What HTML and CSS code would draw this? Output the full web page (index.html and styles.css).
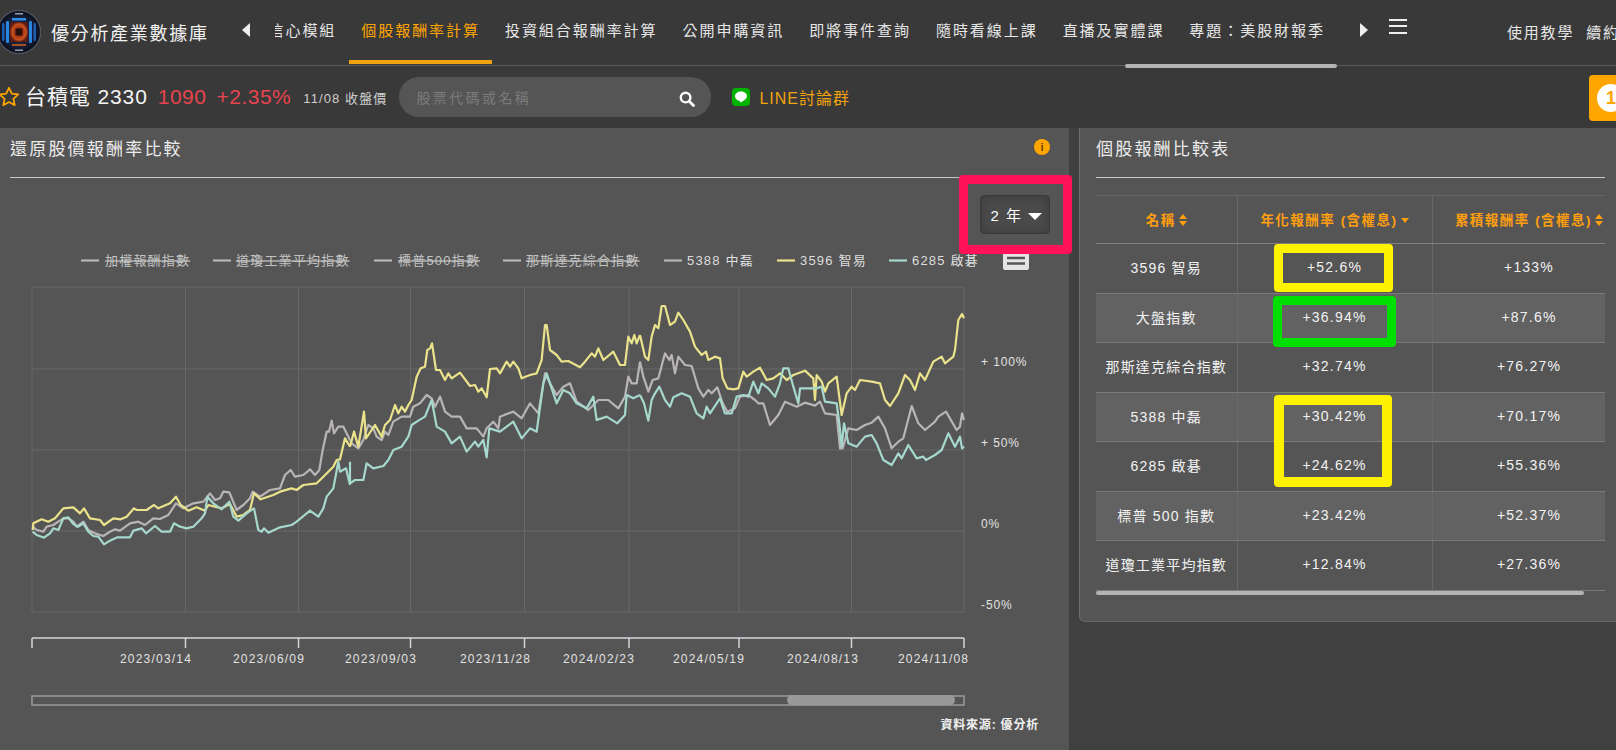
FILE: index.html
```html
<!DOCTYPE html>
<html lang="zh-Hant">
<head>
<meta charset="utf-8">
<title>個股報酬率計算</title>
<link rel="stylesheet" href="styles.css">
</head>
<body>
<div class="page">
  <header class="topbar">
    <svg class="logo" viewBox="0 0 44 44">
      <defs>
        <radialGradient id="lg" cx="50%" cy="50%" r="50%">
          <stop offset="0" stop-color="#2a3350"/><stop offset=".7" stop-color="#151c36"/><stop offset=".92" stop-color="#0c1020"/><stop offset="1" stop-color="#6d7280"/>
        </radialGradient>
        <radialGradient id="lc" cx="50%" cy="50%" r="50%">
          <stop offset="0" stop-color="#2c0f0a"/><stop offset=".45" stop-color="#a8381a"/><stop offset=".8" stop-color="#c9501c"/><stop offset="1" stop-color="#5a1d16"/>
        </radialGradient>
      </defs>
      <circle cx="22" cy="22" r="22" fill="url(#lg)"/>
      <rect x="5" y="13" width="2.500" height="18" rx="1" fill="#1a5fb4"/>
      <rect x="9" y="11" width="3" height="22" rx="1" fill="#2a86dc"/>
      <rect x="32" y="11" width="3" height="22" rx="1" fill="#2a86dc"/>
      <rect x="36.500" y="13" width="2.500" height="18" rx="1" fill="#1a5fb4"/>
      <rect x="15" y="8" width="14" height="2.500" fill="#2f8fe6"/>
      <rect x="15" y="34" width="14" height="2" fill="#a8501f"/>
      <rect x="18" y="3" width="8" height="1.500" fill="#9aa0ad"/>
      <rect x="18" y="39.500" width="8" height="1.500" fill="#9aa0ad"/>
      <rect x="13" y="12" width="18" height="20" rx="2" fill="url(#lc)"/>
      <rect x="18.500" y="18.500" width="7" height="7" fill="#2a0e09"/>
    </svg>
    <div class="brand">優分析產業數據庫</div>
    <span class="tri tri-left"></span>
    <nav class="nav-view">
      <div class="nav-track">
        <a class="nav-item">信心模組</a>
        <a class="nav-item active">個股報酬率計算</a>
        <a class="nav-item">投資組合報酬率計算</a>
        <a class="nav-item">公開申購資訊</a>
        <a class="nav-item">即將事件查詢</a>
        <a class="nav-item">隨時看線上課</a>
        <a class="nav-item">直播及實體課</a>
        <a class="nav-item">專題：美股財報季</a>
      </div>
    </nav>
    <span class="tri tri-right"></span>
    <div class="burger"><i></i><i></i><i></i></div>
    <div class="top-links"><a>使用教學</a><a>續約</a></div>
    <div class="nav-thumb"></div>
  </header>

  <section class="stockbar">
    <svg class="star" viewBox="0 0 20 20"><path d="M10 1.6l2.5 5.4 5.9.7-4.4 4 1.2 5.8L10 14.6l-5.2 2.9L6 11.7l-4.4-4 5.9-.7z" fill="none" stroke="#ffa500" stroke-width="1.6" stroke-linejoin="round"/></svg>
    <div class="stock-name">台積電 2330</div>
    <div class="stock-price">1090</div>
    <div class="stock-change">+2.35%</div>
    <div class="stock-date">11/08 收盤價</div>
    <div class="search">
      <span class="search-ph">股票代碼或名稱</span>
      <svg class="search-icon" viewBox="0 0 16 16"><circle cx="6.6" cy="6.6" r="4.8" fill="none" stroke="#fff" stroke-width="2.4"/><path d="M10.2 10.2l4.3 4.3" stroke="#fff" stroke-width="2.8" stroke-linecap="round"/></svg>
    </div>
    <svg class="line-icon" viewBox="0 0 18 18">
      <rect width="18" height="18" rx="4" fill="#00b300"/>
      <path d="M9 3.4c-3.4 0-6 2.1-6 4.8 0 2.4 2.1 4.3 4.9 4.7.5.1.3.8.2 1.2-.1.5.3.5.7.3 1-.5 3.7-2.2 5-3.7.8-.8 1.2-1.6 1.2-2.5 0-2.700-2.600-4.800-6-4.800z" fill="#fff"/>
    </svg>
    <a class="line-link">LINE討論群</a>
    <div class="notice"><span class="notice-dot">1</span></div>
  </section>

  <main class="content">
    <section class="panel-left">
      <div class="panel-head">
        <h2 class="panel-title">還原股價報酬率比較</h2>
        <span class="info">i</span>
      </div>
      <div class="range-row">
        <button class="range-btn">2 年<span class="caret"></span></button>
      </div>
      <svg class="chart" viewBox="0 250 1068 462">
        <g class="legend off">
          <path class="lg-off" d="M81 260.500h18M213 260.500h18M374 260.500h18M503 260.500h18"/>
          <text x="105" y="265" text-decoration="line-through">加權報酬指數</text>
          <text x="236" y="265" text-decoration="line-through">道瓊工業平均指數</text>
          <text x="398" y="265" text-decoration="line-through">標普500指數</text>
          <text x="526" y="265" text-decoration="line-through">那斯達克綜合指數</text>
        </g>
        <g class="legend">
          <path class="s-gray" d="M664 260.500h18"/><text x="687" y="265">5388 中磊</text>
          <path class="s-yellow" d="M777 260.500h18"/><text x="800" y="265">3596 智易</text>
          <path class="s-teal" d="M889 260.500h18"/><text x="912" y="265">6285 啟碁</text>
        </g>
        <g class="chart-menu">
          <rect x="1003" y="252" width="26" height="18" rx="2"/>
          <path d="M1007 258h18M1007 263.500h18"/>
        </g>
        <g class="grid">
          <path d="M32 287h932v325H32zM32 369h932M32 450h932M32 531h932"/>
          <path d="M185.500 287v325M298.500 287v325M410.500 287v325M524.500 287v325M629 287v325M739 287v325M851.500 287v325"/>
        </g>
        <g transform="translate(30 300) scale(.33333)">
          <polyline class="s-gray" points="8,680 20,690 40,695 50,680 70,675 85,665 100,655 115,655 130,665 140,680 160,665 175,690 195,700 220,708 240,695 255,688 270,692 300,670 325,665 345,675 370,655 390,657 415,645 438,610 460,625 490,610 520,605 540,580 555,600 570,595 580,575 598,577 620,630 640,615 660,595 668,575 690,590 720,570 750,565 765,525 782,510 795,530 820,525 840,508 855,525 868,510 878,450 890,395 897,395 905,362 912,400 925,380 940,380 960,420"/>
          <polyline class="s-yellow" points="8,690 10,670 35,658 55,665 75,655 100,625 130,622 150,640 162,625 180,655 210,660 222,675 250,655 272,658 290,650 312,625 320,630 350,630 372,615 385,625 420,610 438,590 452,615 475,632 500,622 525,632 535,615 575,625 600,612 620,650 640,645 660,630 672,580 692,598 730,585 750,575 785,565 800,570 820,555 860,550 880,530 910,500 920,480 930,478 945,415 960,440"/>
          <polyline class="s-teal" points="8,695 20,705 42,713 60,700 70,685 85,690 100,655 115,652 130,672 145,680 160,670 175,695 190,708 205,710 222,733 240,722 262,712 300,712 310,692 335,685 348,700 375,678 395,695 420,695 432,670 450,680 470,685 490,680 515,655 525,640 532,590 550,610 575,628 598,605 610,650 625,662 650,640 672,625 685,690 695,695 702,685 715,698 750,682 785,675 800,665 840,632 865,650 880,625 890,590 910,565 925,485 930,515 948,505 960,555"/>
        </g>
        <g transform="translate(330 300) scale(.33333)">
          <polyline class="s-gray" points="60,420 65,430 85,445 100,420 115,375 130,385 140,410 155,420 165,395 175,405 190,365 215,350 240,350 250,320 270,310 290,285 305,295 315,320 330,290 345,335 365,350 390,350 410,385 440,385 460,410 470,385 490,365 505,385 510,350 530,342 550,335 575,355 600,310 625,340 645,220 660,250 680,285 700,260 720,250 740,305 775,330 785,320 805,300 835,300 865,325 885,290 895,230 905,250 920,250 930,185"/>
          <polyline class="s-yellow" points="60,440 72,395 85,440 102,335 108,415 135,375 155,410 165,375 180,360 195,315 205,340 215,320 225,335 235,315 245,300 260,230 272,205 285,200 292,150 300,145 306,130 318,210 330,210 345,240 355,220 365,235 390,218 420,258 435,255 445,275 455,265 470,292 480,207 500,205 510,220 530,185 540,200 550,185 565,205 575,235 600,225 620,220 635,180 645,75 650,75 660,150 680,165 695,185 715,183 750,202 765,185 785,160 795,170 805,145 820,180 850,155 870,195 885,195 895,110 905,130 913,105 920,130 930,105"/>
          <polyline class="s-teal" points="60,485 60,550 75,540 100,540 110,490 130,505 160,498 175,480 190,450 215,440 235,410 245,375 265,362 285,350 305,300 320,380 345,395 365,430 390,410 410,455 435,425 445,440 460,420 470,472 478,385 510,395 550,365 575,415 600,385 620,395 640,250 650,220 665,265 680,310 700,270 720,280 740,310 770,325 790,290 800,360 830,350 862,370 885,345 890,285 910,295 930,285"/>
        </g>
        <g transform="translate(640 300) scale(.33333)">
          <polyline class="s-gray" points="0,185 10,230 25,275 38,240 55,235 75,160 88,180 95,165 105,220 115,170 135,195 155,198 175,265 190,290 205,270 215,280 232,262 248,310 262,335 285,325 300,290 325,285 345,300 355,310 370,310 390,375 415,345 435,305 470,320 495,308 525,317 540,305 555,340 590,345 600,445 608,445 625,385 650,390 675,375 695,368 715,350 735,385 755,445 775,425 790,415 815,318 835,370 855,390 885,365 895,350 918,335 950,390 960,380 966,340 972,360"/>
          <polyline class="s-yellow" points="0,105 15,170 25,180 35,110 45,75 55,85 65,18 75,18 90,75 105,65 115,38 130,60 150,95 165,140 185,165 198,155 205,180 225,170 240,175 248,235 262,265 280,268 295,265 310,215 320,230 340,215 360,203 380,240 400,235 420,220 440,240 460,225 495,212 520,235 525,300 530,225 545,245 555,275 565,250 590,230 605,345 620,280 635,260 645,270 660,240 695,245 720,250 735,300 750,318 775,280 795,225 810,240 825,270 840,220 855,240 880,185 905,170 915,190 940,170 945,150 955,60 966,42 972,55"/>
          <polyline class="s-teal" points="0,285 12,310 25,362 35,300 45,280 58,260 75,300 90,320 100,292 125,280 150,290 170,340 190,355 200,320 210,340 240,295 255,340 275,340 290,290 310,285 325,290 340,245 355,280 365,250 385,265 405,290 420,250 430,205 445,205 460,260 475,310 480,265 530,265 545,260 555,305 590,310 598,370 605,440 612,370 625,430 650,440 675,410 695,405 710,430 730,480 755,495 775,460 785,475 805,435 830,475 850,470 858,480 885,465 905,450 925,400 945,440 960,410 966,445 972,440"/>
        </g>
        <g class="axis-y">
          <text x="981" y="366">+ 100%</text>
          <text x="981" y="447">+ 50%</text>
          <text x="981" y="528">0%</text>
          <text x="981" y="609">-50%</text>
        </g>
        <path class="axis-x" d="M32 638h932M32 638v10M185.500 638v10M298.500 638v10M410.500 638v10M524.500 638v10M629 638v10M739 638v10M851.500 638v10M964 638v10"/>
        <g class="axis-labels">
          <text x="120" y="663">2023/03/14</text>
          <text x="233" y="663">2023/06/09</text>
          <text x="345" y="663">2023/09/03</text>
          <text x="460" y="663">2023/11/28</text>
          <text x="563" y="663">2024/02/23</text>
          <text x="673" y="663">2024/05/19</text>
          <text x="787" y="663">2024/08/13</text>
          <text x="898" y="663">2024/11/08</text>
        </g>
        <rect class="navi" x="32" y="696" width="932" height="9"/>
        <rect class="navi-thumb" x="787" y="695" width="168" height="10" rx="5"/>
      </svg>
      <div class="source">資料來源: 優分析</div>
      <div class="mark mark-pink"></div>
    </section>

    <section class="panel-right">
      <div class="panel-head">
        <h2 class="panel-title">個股報酬比較表</h2>
      </div>
      <div class="table-wrap">
        <table class="returns">
          <thead>
            <tr>
              <th class="c1">名稱<span class="sort"></span></th>
              <th class="c2">年化報酬率 (含權息)<span class="sort-down"></span></th>
              <th class="c3">累積報酬率 (含權息)<span class="sort"></span></th>
            </tr>
          </thead>
          <tbody>
            <tr><td>3596 智易</td><td>+52.6%</td><td>+133%</td></tr>
            <tr><td>大盤指數</td><td>+36.94%</td><td>+87.6%</td></tr>
            <tr><td>那斯達克綜合指數</td><td>+32.74%</td><td>+76.27%</td></tr>
            <tr><td>5388 中磊</td><td>+30.42%</td><td>+70.17%</td></tr>
            <tr><td>6285 啟碁</td><td>+24.62%</td><td>+55.36%</td></tr>
            <tr><td>標普 500 指數</td><td>+23.42%</td><td>+52.37%</td></tr>
            <tr><td>道瓊工業平均指數</td><td>+12.84%</td><td>+27.36%</td></tr>
          </tbody>
        </table>
        <div class="table-scroll"></div>
        <div class="mark mark-y1"></div>
        <div class="mark mark-g"></div>
        <div class="mark mark-y2"></div>
      </div>
    </section>
  </main>
</div>
</body>
</html>
```
FILE: styles.css
```css
* { box-sizing: border-box; }
html, body { margin: 0; padding: 0; }
body {
  width: 1616px;
  height: 750px;
  overflow: hidden;
  background: #404040;
  color: #eee;
  font-family: "Liberation Sans", "Noto Sans CJK TC", sans-serif;
}
.page { width: 1616px; height: 750px; overflow: hidden; display: flex; flex-direction: column; }

/* top bar */
.topbar {
  position: relative;
  flex: none;
  height: 66px;
  display: flex;
  align-items: center;
  background: #393939;
  border-bottom: 1px solid #5c5c5c;
  padding-bottom: 1px;
}
.logo { flex: none; width: 44px; height: 44px; margin-left: -3px; }
.brand { flex: none; margin-left: 10px; width: 158px; font-size: 18px; letter-spacing: 1.7px; color: #f2f2f2; white-space: nowrap; }
.tri { flex: none; width: 0; height: 0; border-top: 7px solid transparent; border-bottom: 7px solid transparent; }
.tri-left { margin-left: 33px; border-right: 8px solid #eee; margin-top: -4px; }
.tri-right { margin-left: 14px; border-left: 8px solid #eee; margin-top: -4px; }
.nav-view { flex: none; margin-left: 25px; width: 1071px; height: 65px; overflow: hidden; }
.nav-track { display: flex; margin-left: -19px; height: 65px; }
.nav-item {
  flex: none;
  height: 64px;
  line-height: 61px;
  padding: 0 12.5px;
  font-size: 15px;
  letter-spacing: 1.95px;
  color: #e6e6e6;
  white-space: nowrap;
  border-bottom: 4px solid transparent;
}
.nav-item.active { color: #ffa500; border-bottom-color: #f0a30f; }
.burger { flex: none; margin-left: 21px; width: 18px; display: flex; flex-direction: column; gap: 4.5px; margin-top: -12px; }
.burger i { display: block; height: 2px; background: #eee; }
.top-links { flex: none; margin-left: 100px; display: flex; gap: 12px; font-size: 15px; letter-spacing: 1.8px; color: #e6e6e6; white-space: nowrap; margin-top: -2px; }
.nav-thumb { position: absolute; z-index: 2; left: 1125px; top: 64px; width: 212px; height: 4px; border-radius: 2px; background: #b4b4b4; }

/* stock bar */
.stockbar {
  flex: none;
  position: relative;
  height: 62px;
  display: flex;
  align-items: center;
  background: #393939;
}
.star { flex: none; width: 22px; height: 22px; margin-left: -2px; }
.stock-name { margin-left: 5px; font-size: 21px; line-height: 24px; letter-spacing: .9px; color: #f4f4f4; white-space: nowrap; }
.stock-price { margin-left: 10px; font-size: 21px; line-height: 24px; letter-spacing: .5px; color: #e8434f; }
.stock-change { margin-left: 10px; font-size: 21px; line-height: 24px; letter-spacing: .5px; color: #e8434f; }
.stock-date { margin-left: 12px; font-size: 13px; line-height: 18px; letter-spacing: 1.1px; color: #cfcfcf; white-space: nowrap; margin-top: 3px; }
.search {
  flex: none;
  margin-left: 12px;
  width: 312px;
  height: 40px;
  border-radius: 20px;
  background: #555;
  display: flex;
  align-items: center;
  justify-content: space-between;
  padding: 0 16px 0 17px;
}
.search-ph { font-size: 14px; letter-spacing: 2.400px; color: #7b7b7b; white-space: nowrap; }
.search-icon { width: 16px; height: 16px; margin-top: 4px; }
.line-icon { flex: none; width: 18px; height: 18px; margin-left: 21px; }
.line-link { margin-left: 9px; font-size: 16px; letter-spacing: 1px; color: #f2a30f; white-space: nowrap; }
.notice {
  position: absolute;
  left: 1589px;
  top: 9px;
  width: 60px;
  height: 46px;
  border-radius: 4px;
  background: #ffa500;
  display: flex;
  align-items: center;
  padding-left: 8px;
}
.notice-dot { width: 28px; height: 28px; border-radius: 50%; background: #fff; color: #ffa500; font-size: 18px; font-weight: 700; line-height: 28px; text-align: center; }

/* content */
.content { flex: 1; display: flex; align-items: flex-start; min-height: 0; }
.panel-left { position: relative; flex: none; width: 1069px; height: 622px; background: #555; }
.panel-right {
  position: relative;
  flex: none;
  margin-left: 10px;
  width: 537px;
  height: 494px;
  background: #555;
  border-left: 1px solid #707070;
  border-bottom: 1px solid #666;
  border-bottom-left-radius: 6px;
}
.panel-head { height: 50px; margin: 0 0 0 10px; border-bottom: 1px solid #c8c8c8; display: flex; justify-content: space-between; align-items: flex-start; }
.panel-left .panel-head { margin-right: 29px; }
.panel-right .panel-head { margin: 0 11px 0 16px; }
.panel-title { margin: 10px 0 0; font-size: 17px; line-height: 24px; font-weight: 400; letter-spacing: 2.2px; color: #ececec; white-space: nowrap; }
.info { width: 16px; height: 16px; margin: 11px -10px 0 0; border-radius: 50%; background: #ffa500; color: #6a4300; font-size: 11px; font-weight: 700; line-height: 16px; text-align: center; }

.range-row { height: 72px; display: flex; justify-content: flex-end; align-items: flex-start; padding: 17px 19px 0 0; }
.range-btn {
  width: 70px;
  height: 39px;
  display: flex;
  align-items: center;
  justify-content: center;
  gap: 5px;
  padding: 0 0 0 2px;
  border: 1px solid #3a3a3a;
  border-radius: 4px;
  background: #4a4a4a;
  box-shadow: inset 0 0 8px #3a3a3a;
  color: #fff;
  font: 15px "Liberation Sans", "Noto Sans CJK TC", sans-serif;
  letter-spacing: 1.5px;
}
.caret { width: 0; height: 0; margin-top: 3px; border-left: 7px solid transparent; border-right: 7px solid transparent; border-top: 7px solid #fff; }

/* chart */
.chart { display: block; width: 1068px; height: 462px; }
.legend text { font-size: 13px; letter-spacing: 1.2px; fill: #dedede; }
.legend.off text { fill: #c4c4c4; }
.lg-off { stroke: #bdbdbd; stroke-width: 2; fill: none; }
.chart-menu rect { fill: #e4e4e4; }
.chart-menu path { stroke: #555; stroke-width: 2.500; fill: none; }
.grid path { fill: none; stroke: #686868; stroke-width: 1; }
.s-gray, .s-yellow, .s-teal { fill: none; stroke-width: 2.2; stroke-linejoin: round; vector-effect: non-scaling-stroke; }
.s-gray { stroke: #b9b5b6; }
.s-yellow { stroke: #ebe38c; }
.s-teal { stroke: #a6d8cd; }
.axis-y text { font-size: 12px; letter-spacing: .9px; fill: #e2e2e2; }
.axis-labels text { font-size: 12px; letter-spacing: 1.200px; fill: #e2e2e2; }
.axis-x { fill: none; stroke: #d4d4dc; stroke-width: 1.500; }
.navi { fill: none; stroke: #9a9a9a; stroke-width: 1.500; }
.navi-thumb { fill: #999; }
.source { margin: 3px 0 0; padding-right: 30px; text-align: right; font-size: 12px; font-weight: 700; color: #f0f0f0; letter-spacing: .8px; }

/* annotation boxes */
.mark { position: absolute; border-style: solid; border-radius: 4px; }
.mark-pink { left: 959px; top: 47px; width: 113px; height: 79px; border-width: 9px; border-color: #ff1257; }
.mark-y1 { left: 178px; top: 48px; width: 119px; height: 48px; border-width: 9px; border-color: #fff200; }
.mark-g { left: 177px; top: 100px; width: 123px; height: 51px; border-width: 9px; border-color: #00e000; }
.mark-y2 { left: 178px; top: 199px; width: 118px; height: 92px; border-width: 10px; border-color: #fff200; }

/* table */
.table-wrap { position: relative; width: 509px; height: 402px; margin: 17px 0 0 16px; overflow: hidden; border-top: 1px solid #666; }
.returns { border-collapse: collapse; table-layout: fixed; width: 530px; }
.returns .c1 { width: 141px; }
.returns .c2 { width: 195px; }
.returns .c3 { width: 194px; }
.returns th { height: 47.500px; padding: 0 0 2px; font-size: 13.500px; font-weight: 700; letter-spacing: 1.500px; color: #ff9f0f; white-space: nowrap; border-right: 1px solid #686868; border-bottom: 1px solid #808080; }
.returns td { height: 49.500px; padding: 0 0 2px; font-size: 14px; letter-spacing: 1.200px; color: #f2f2f2; text-align: center; white-space: nowrap; border-right: 1px solid #686868; border-bottom: 1px solid #7a7a7a; }
.returns tbody tr:nth-child(even) td { background: #626262; }
.sort, .sort-down { display: inline-block; position: relative; width: 8px; height: 12px; margin-left: 3px; vertical-align: -1px; }
.sort::before, .sort::after, .sort-down::after { content: ""; position: absolute; left: 0; width: 0; height: 0; border-left: 4px solid transparent; border-right: 4px solid transparent; }
.sort::before { top: 0; border-bottom: 5px solid #ff9f0f; }
.sort::after { bottom: 0; border-top: 5px solid #ff9f0f; }
.sort-down::after { top: 4px; border-top: 5px solid #ff9f0f; }
.table-scroll { position: absolute; left: 0; top: 395px; width: 488px; height: 4px; border-radius: 2px; background: #b4b4b4; }
```
